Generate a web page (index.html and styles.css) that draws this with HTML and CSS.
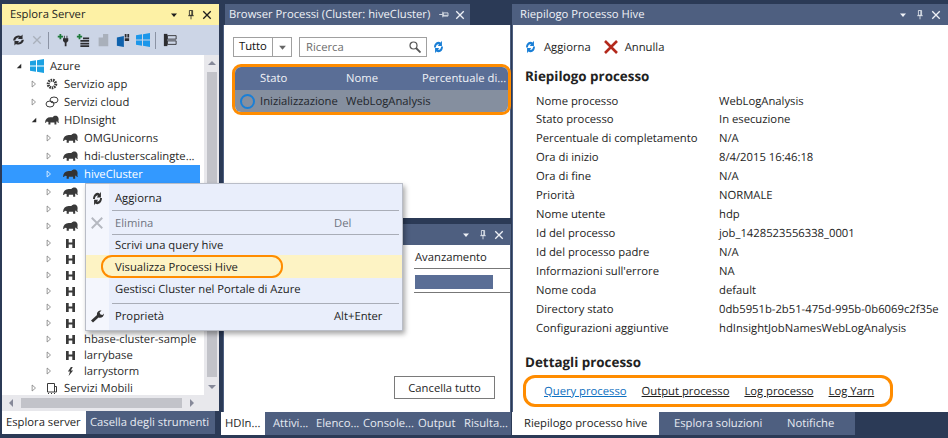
FILE: index.html
```html
<!DOCTYPE html>
<html lang="en">
<head>
    <meta charset="UTF-8">
    <meta name="viewport" content="width=device-width, initial-scale=1.0">
    <title>Riepilogo Processo Hive</title>
    <link rel="stylesheet" href="styles.css">
</head>
<body>
    <svg class="defs" width="0" height="0">
        <symbol id="refresh" viewBox="0 0 16 16" preserveAspectRatio="none">
            <path d="M1.500 8.500a6.500 6.500 0 0 1 9.700-5.700L13 .8v6H7l1.900-1.900A3.700 3.700 0 0 0 4.200 8.500z"/>
            <path d="M14.500 7.500a6.500 6.500 0 0 1-9.700 5.700L3 15.200v-6h6l-1.900 1.900a3.700 3.700 0 0 0 4.700-3.600z"/>
        </symbol>
        <symbol id="cross" viewBox="0 0 12 12">
            <path d="M1.500 1.500l9 9M10.500 1.500l-9 9" fill="none" stroke="currentColor" stroke-width="1.600"/>
        </symbol>
        <symbol id="pin" viewBox="0 0 10 12">
            <path d="M3 1h4v6H3zM1.500 7.500h7M5 8v4M6 1.500v5.500" fill="none" stroke="currentColor"/>
        </symbol>
        <symbol id="elephant" viewBox="0 0 16 12">
            <path d="M0 9C.4 5 2.500 2.800 6 2.800h3C10 1 13.500.6 14.800 2.600c1 1.500.9 3.300.5 4.600l.7 1.800h-1.400l-.8-1.500-.8.600V11h-2.200V8.800H6.200V11H3.900V8.200L2 7.800 1 9.200z"/>
        </symbol>
        <symbol id="hbase" viewBox="0 0 10 10">
            <path d="M0 0h3v3.800h4V0h3v10H7V6.200H3V10H0z"/>
        </symbol>
        <symbol id="bolt" viewBox="0 0 10 12">
            <path d="M5.500 0L1.500 6h2.800L2.500 12l6-7.200H5.500L8 0z"/>
        </symbol>
        <symbol id="windows" viewBox="0 0 14 14">
            <path d="M0 2.200L6 1.300V6.500H0zM7 1.200L14 0V6.500H7zM0 7.500H6V12.700L0 11.800zM7 7.500H14V14L7 12.800z"/>
        </symbol>
        <symbol id="caret" viewBox="0 0 8 8">
            <path d="M1 2.500h6L4 6z"/>
        </symbol>
        <symbol id="arrow" viewBox="0 0 8 10">
            <path d="M1.500 1l4.500 4-4.500 4z" fill="none" stroke="currentColor"/>
        </symbol>
        <symbol id="open" viewBox="0 0 8 8">
            <path d="M7 1v6H1z"/>
        </symbol>
    </svg>

    <div class="ide">
        <!-- esplora server -->
        <section class="pane pane-left">
            <header class="title title-active">
                <span class="title-text">Esplora Server</span>
                <svg class="btn-caret"><use href="#caret"/></svg>
                <svg class="btn-pin"><use href="#pin"/></svg>
                <svg class="btn-close"><use href="#cross"/></svg>
            </header>
            <div class="server-tools">
                <svg class="ti ti-refresh"><use href="#refresh"/></svg>
                <svg class="ti ti-off ti-small"><use href="#cross"/></svg>
                <i class="tool-sep"></i>
                <svg class="ti" viewBox="0 0 16 16"><path class="green" d="M2 3h2V1h2v2h2v2H6v2H4V5H2z"/><path d="M9 3h1v3h2V3h1v3h1v3l-2 2v4h-2v-4L8 9V6h1z"/></svg>
                <svg class="ti" viewBox="0 0 16 16"><path class="green" d="M1 3h2V1h2v2h2v2H5v2H3V5H1z"/><path d="M5 8h10v2H5zM5 11h10v2H5zM5 14h10v2H5zM8 5h7v2H8z"/></svg>
                <svg class="ti ti-off" viewBox="0 0 16 16"><path d="M3 5h5V1h6v14H3z"/></svg>
                <svg class="ti" viewBox="0 0 16 16"><path class="blue" d="M1 5l8-1.500V16l-8-1.500z"/><path d="M10 1h2v4h-2zM13 1h2v4h-2zM10 6h5v3h-5z"/></svg>
                <svg class="ti ti-win"><use href="#windows"/></svg>
                <i class="tool-sep tool-sep-2"></i>
                <svg class="ti" viewBox="0 0 16 16"><path d="M5 3h10v4H5zM5 9h10v4H5z" fill="none" stroke="currentColor"/><path d="M1 1h4v14H1z"/></svg>
            </div>
            <div class="tree-wrap">
                <div class="tree">
                    <div class="row lv0"><svg class="tw"><use href="#open"/></svg><svg class="ic ic-azure"><use href="#windows"/></svg>Azure</div>
                    <div class="row lv1"><svg class="tw tw-closed"><use href="#arrow"/></svg><svg class="ic" viewBox="0 0 14 14"><circle cx="7" cy="7" r="3.800" fill="none" stroke="currentColor" stroke-dasharray="1.500 .8" stroke-width="3"/></svg>Servizio app</div>
                    <div class="row lv1"><svg class="tw tw-closed"><use href="#arrow"/></svg><svg class="ic" viewBox="0 0 14 14"><ellipse cx="5" cy="9" rx="4" ry="3" fill="none" stroke="currentColor"/><ellipse cx="9" cy="5" rx="4" ry="3" fill="none" stroke="currentColor"/></svg>Servizi cloud</div>
                    <div class="row lv1"><svg class="tw"><use href="#open"/></svg><svg class="ic"><use href="#elephant"/></svg>HDInsight</div>
                    <div class="row lv2"><svg class="tw tw-closed"><use href="#arrow"/></svg><svg class="ic"><use href="#elephant"/></svg>OMGUnicorns</div>
                    <div class="row lv2"><svg class="tw tw-closed"><use href="#arrow"/></svg><svg class="ic"><use href="#elephant"/></svg>hdi-clusterscalingte...</div>
                    <div class="row lv2 selected"><svg class="tw tw-closed"><use href="#arrow"/></svg><svg class="ic"><use href="#elephant"/></svg>hiveCluster</div>
                    <div class="row lv2 mid"><svg class="tw tw-closed"><use href="#arrow"/></svg><svg class="ic"><use href="#elephant"/></svg></div>
                    <div class="row lv2 mid"><svg class="tw tw-closed"><use href="#arrow"/></svg><svg class="ic"><use href="#elephant"/></svg></div>
                    <div class="row lv2 mid"><svg class="tw tw-closed"><use href="#arrow"/></svg><svg class="ic"><use href="#elephant"/></svg></div>
                    <div class="row lv2 short"><svg class="tw tw-closed"><use href="#arrow"/></svg><svg class="ic ic-h"><use href="#hbase"/></svg></div>
                    <div class="row lv2 short"><svg class="tw tw-closed"><use href="#arrow"/></svg><svg class="ic ic-h"><use href="#hbase"/></svg></div>
                    <div class="row lv2 short"><svg class="tw tw-closed"><use href="#arrow"/></svg><svg class="ic ic-h"><use href="#hbase"/></svg></div>
                    <div class="row lv2 short"><svg class="tw tw-closed"><use href="#arrow"/></svg><svg class="ic ic-h"><use href="#hbase"/></svg></div>
                    <div class="row lv2 short"><svg class="tw tw-closed"><use href="#arrow"/></svg><svg class="ic ic-h"><use href="#hbase"/></svg></div>
                    <div class="row lv2 short"><svg class="tw tw-closed"><use href="#arrow"/></svg><svg class="ic ic-h"><use href="#hbase"/></svg></div>
                    <div class="row lv2 short"><svg class="tw tw-closed"><use href="#arrow"/></svg><svg class="ic ic-h"><use href="#hbase"/></svg>hbase-cluster-sample</div>
                    <div class="row lv2 short"><svg class="tw tw-closed"><use href="#arrow"/></svg><svg class="ic ic-h"><use href="#hbase"/></svg>larrybase</div>
                    <div class="row lv2 short"><svg class="tw tw-closed"><use href="#arrow"/></svg><svg class="ic ic-h"><use href="#bolt"/></svg>larrystorm</div>
                    <div class="row lv1"><svg class="tw tw-closed"><use href="#arrow"/></svg><svg class="ic" viewBox="0 0 14 14"><path d="M2.500 2.500h7v8.500h-7zM9.500 5.500h2v5.500h-2M3 12.500h1M6 12.500h1M9 12.500h1" fill="none" stroke="currentColor"/></svg>Servizi Mobili</div>
                </div>
                <div class="vscroll">
                    <i class="up"></i>
                    <i class="vthumb"></i>
                    <i class="down"></i>
                </div>
            </div>
            <div class="hscroll">
                <i class="left"></i>
                <i class="hthumb"></i>
                <i class="right"></i>
            </div>
            <nav class="tabs tabs-left">
                <span class="tab on">Esplora server</span>
                <span class="tab">Casella degli strumenti</span>
            </nav>
        </section>

        <!-- colonna centrale -->
        <section class="pane pane-mid">
            <div class="mid-top">
                <header class="title-row">
                    <div class="title title-tab">
                        <span class="title-text">Browser Processi (Cluster: hiveCluster)</span>
                        <svg class="btn-pin btn-pin-h"><use href="#pin"/></svg>
                        <svg class="btn-close"><use href="#cross"/></svg>
                    </div>
                </header>
                <div class="browser">
                    <div class="filters">
                        <div class="combo"><span class="combo-val">Tutto</span><span class="combo-btn"><svg class="combo-caret"><use href="#caret"/></svg></span></div>
                        <div class="search">
                            <span>Ricerca</span>
                            <svg class="lens" viewBox="0 0 12 12"><circle cx="4.500" cy="4.500" r="3.500" fill="none" stroke="currentColor" stroke-width="1.200"/><path d="M7 7l4.500 4.500" stroke="currentColor" stroke-width="1.800"/></svg>
                        </div>
                        <svg class="blue-refresh"><use href="#refresh"/></svg>
                    </div>
                    <div class="jobs-ring">
                        <div class="jobs-head">
                            <span class="col-state">Stato</span>
                            <span class="col-name">Nome</span>
                            <span>Percentuale di...</span>
                        </div>
                        <div class="jobs-row">
                            <i class="spinner"></i>
                            <span class="col-state-r">Inizializzazione</span>
                            <span>WebLogAnalysis</span>
                        </div>
                    </div>
                </div>
            </div>
            <div class="mid-bottom">
                <header class="title">
                    <span class="title-text"></span>
                    <svg class="btn-caret"><use href="#caret"/></svg>
                    <svg class="btn-pin"><use href="#pin"/></svg>
                    <svg class="btn-close"><use href="#cross"/></svg>
                </header>
                <div class="tasks">
                    <div class="tasks-head">Avanzamento</div>
                    <div class="tasks-row"><i class="bar"></i></div>
                    <button class="clear-btn">Cancella tutto</button>
                </div>
                <nav class="tabs tabs-mid">
                    <span class="tab on">HDIn...</span>
                    <span class="tab tab-a">Attivi...</span>
                    <span class="tab tab-b">Elenco...</span>
                    <span class="tab tab-c">Console...</span>
                    <span class="tab tab-d">Output</span>
                    <span class="tab">Risulta...</span>
                </nav>
            </div>
        </section>

        <!-- riepilogo -->
        <section class="pane pane-right">
            <header class="title">
                <span class="title-text">Riepilogo Processo Hive</span>
                <svg class="btn-caret"><use href="#caret"/></svg>
                <svg class="btn-pin"><use href="#pin"/></svg>
                <svg class="btn-close"><use href="#cross"/></svg>
            </header>
            <div class="summary">
                <div class="summary-tools">
                    <svg class="blue-refresh"><use href="#refresh"/></svg>
                    <span class="act-refresh">Aggiorna</span>
                    <svg class="red-cross" viewBox="0 0 14 14"><path d="M1 1l12 12M13 1L1 13" stroke="currentColor" stroke-width="2.600" fill="none"/></svg>
                    <span>Annulla</span>
                </div>
                <h2 class="heading">Riepilogo processo</h2>
                <dl class="props">
                    <div class="prop prop-first"><dt>Nome processo</dt><dd>WebLogAnalysis</dd></div>
                    <div class="prop"><dt>Stato processo</dt><dd>In esecuzione</dd></div>
                    <div class="prop"><dt>Percentuale di completamento</dt><dd>N/A</dd></div>
                    <div class="prop"><dt>Ora di inizio</dt><dd>8/4/2015 16:46:18</dd></div>
                    <div class="prop"><dt>Ora di fine</dt><dd>N/A</dd></div>
                    <div class="prop"><dt>Priorità</dt><dd>NORMALE</dd></div>
                    <div class="prop"><dt>Nome utente</dt><dd>hdp</dd></div>
                    <div class="prop"><dt>Id del processo</dt><dd>job_1428523556338_0001</dd></div>
                    <div class="prop"><dt>Id del processo padre</dt><dd>N/A</dd></div>
                    <div class="prop"><dt>Informazioni sull'errore</dt><dd>NA</dd></div>
                    <div class="prop"><dt>Nome coda</dt><dd>default</dd></div>
                    <div class="prop"><dt>Directory stato</dt><dd>0db5951b-2b51-475d-995b-0b6069c2f35e</dd></div>
                    <div class="prop"><dt>Configurazioni aggiuntive</dt><dd>hdInsightJobNamesWebLogAnalysis</dd></div>
                </dl>
                <h2 class="heading heading-details">Dettagli processo</h2>
                <div class="links-ring">
                    <a class="link link-on">Query processo</a>
                    <a class="link">Output processo</a>
                    <a class="link">Log processo</a>
                    <a class="link">Log Yarn</a>
                </div>
            </div>
            <nav class="tabs tabs-right">
                <span class="tab on">Riepilogo processo hive</span>
                <span class="tab tab-sol">Esplora soluzioni</span>
                <span class="tab tab-not">Notifiche</span>
            </nav>
        </section>
    </div>

    <!-- menu contestuale -->
    <div class="menu">
        <div class="mi mi-first"><svg class="mi-icon mi-refresh"><use href="#refresh"/></svg><span class="mi-text">Aggiorna</span></div>
        <i class="mi-sep"></i>
        <div class="mi mi-off"><svg class="mi-icon mi-x"><use href="#cross"/></svg><span class="mi-text">Elimina</span><span class="mi-key">Del</span></div>
        <i class="mi-sep"></i>
        <div class="mi mi-scrivi"><span class="mi-icon"></span><span class="mi-text">Scrivi una query hive</span></div>
        <div class="mi mi-hot"><span class="mi-icon"></span><span class="mi-text">Visualizza Processi Hive</span><i class="mi-ring"></i></div>
        <div class="mi mi-gest"><span class="mi-icon"></span><span class="mi-text">Gestisci Cluster nel Portale di Azure</span></div>
        <i class="mi-sep mi-sep-last"></i>
        <div class="mi"><svg class="mi-icon" viewBox="0 0 14 14"><path d="M1 11.500L7 6C6.500 3.500 8.500 1 11.500 1.500L9.500 3.500l1 2 2 .5L14 4.500C14 8 11 9.500 8.500 8.500L3 13.500z"/></svg><span class="mi-text">Proprietà</span><span class="mi-key">Alt+Enter</span></div>
    </div>
</body>
</html>
```

FILE: styles.css
```css
* {
    box-sizing: border-box;
}

body {
    margin: 0;
    width: 948px;
    height: 438px;
    overflow: hidden;
    position: relative;
    background-color: #2b3a56;
    color: #1e1e1e;
    font-family: "Open Sans", "Noto Sans", sans-serif;
    font-size: 11.25px;
    text-rendering: geometricPrecision;
}

.defs {
    display: block;
    height: 0;
}

.ide {
    display: flex;
    height: 438px;
    padding-top: 4px;
}

.pane {
    display: flex;
    flex-direction: column;
}

.pane-left {
    width: 217px;
    margin-left: 2px;
}

.pane-mid {
    width: 290px;
    margin-left: 2px;
}

.pane-right {
    width: 436px;
    margin-left: 1px;
}

/* title bars */
.title {
    display: flex;
    align-items: center;
    height: 21px;
    flex: none;
    padding: 0 7px 0 8px;
    background-color: #4e5f80;
    color: #eef1f6;
}

.title-active {
    background-color: #fdf1a5;
    color: #1e1e1e;
}

.title-text {
    flex: 1;
    white-space: nowrap;
}

.title-row {
    height: 21px;
    flex: none;
    padding-left: 4px;
}

.title-tab {
    width: 245px;
    padding: 0 5px 0 4px;
}

.btn-caret {
    width: 8px;
    height: 8px;
    fill: currentColor;
    margin-right: 9px;
}

.btn-pin {
    width: 8px;
    height: 11px;
    color: inherit;
    margin-right: 7px;
}

.btn-pin-h {
    transform: rotate(90deg);
}

.btn-close {
    width: 10px;
    height: 10px;
}

/* left pane */
.server-tools {
    display: flex;
    align-items: center;
    height: 30px;
    flex: none;
    padding-left: 9px;
    background-color: #ccd5e6;
    color: #2d2d30;
}

.ti {
    width: 14px;
    height: 14px;
    fill: currentColor;
    margin-right: 6px;
}

.ti-refresh {
    height: 12px;
    margin-left: 1px;
    margin-right: 5px;
    width: 13px;
}

.ti-off {
    color: #a9b0bb;
}

.ti-small {
    width: 10px;
    height: 10px;
    margin: 0 6px 0 2px;
}

.ti-win {
    fill: #1c97ea;
}

.green {
    fill: #1c7a3a;
}

.blue {
    fill: #0f62ad;
}

.tool-sep {
    width: 1px;
    height: 17px;
    margin: 0 7px 0 0;
    background-color: #8b93a4;
}

.tool-sep-2 {
    margin-left: -1px;
}

.tree-wrap {
    display: flex;
    height: 340px;
    flex: none;
    background-color: #fff;
}

.tree {
    width: 199px;
    padding-top: 2px;
}

.row {
    display: flex;
    align-items: center;
    height: 18px;
    white-space: nowrap;
    color: #2b2b2b;
}

.row.mid {
    height: 17.4px;
}

.row.short {
    height: 16px;
}

.selected {
    background-color: #3399ff;
    color: #fff;
}

.lv0 {
    padding-left: 14px;
}

.lv1 {
    padding-left: 29px;
}

.lv2 {
    padding-left: 44px;
}

.tw {
    width: 6px;
    height: 8px;
    fill: #2b2b2b;
    margin-right: 8px;
    flex: none;
}

.tw-closed {
    fill: none;
    color: #777;
}

.selected .tw-closed {
    color: #fff;
}

.ic {
    width: 14px;
    height: 14px;
    fill: #3a3a3a;
    color: #3a3a3a;
    margin-right: 5px;
    flex: none;
}

.lv0 .ic {
    margin-right: 6px;
}

.lv2 .ic {
    width: 15px;
    margin-right: 6px;
    margin-left: 3px;
}

.ic-h {
    height: 9px;
}

.ic-azure {
    fill: #1ba1e2;
}

.selected .ic {
    fill: #333;
}

.vscroll {
    width: 15px;
    margin-left: 4px;
    display: flex;
    flex-direction: column;
    align-items: center;
    background-color: #e8e8ec;
}

.up {
    margin: 6px 0 7px;
    border: 4px solid transparent;
    border-top: 0;
    border-bottom: 4px solid #868999;
}

.vthumb {
    width: 10px;
    flex: 1;
    background-color: #c2c3c9;
}

.down {
    margin: 8px 0 6px;
    border: 4px solid transparent;
    border-bottom: 0;
    border-top: 4px solid #868999;
}

.hscroll {
    display: flex;
    align-items: center;
    height: 16px;
    flex: none;
    background-color: #e8e8ec;
}

.left {
    margin: 0 8px 0 7px;
    border: 4px solid transparent;
    border-left: 0;
    border-right: 4px solid #868999;
}

.hthumb {
    width: 161px;
    height: 10px;
    background-color: #c2c3c9;
}

.right {
    margin-left: 8px;
    border: 4px solid transparent;
    border-right: 0;
    border-left: 4px solid #868999;
}

/* tab strips */
.tabs {
    display: flex;
    align-items: center;
    height: 23px;
    flex: none;
    color: #e6eaf2;
}

.tab {
    display: flex;
    align-items: center;
    height: 100%;
    white-space: nowrap;
    background-color: #4e5f80;
}

.tab.on {
    background-color: #fff;
    color: #1e1e1e;
}

.tabs-left .tab {
    padding: 0 4px;
    width: 84px;
}

.tabs-left .tab:last-child {
    width: 129px;
    padding-left: 4px;
}

/* middle */
.mid-top {
    height: 214px;
    flex: none;
}

.browser {
    height: 193px;
    margin-left: 2px;
    padding: 12px 0 0 9px;
    border-left: 1px solid #4e5f80;
    border-right: 1px solid #4e5f80;
    background-color: #fff;
}

.filters {
    display: flex;
    align-items: center;
    height: 20px;
}

.combo {
    display: flex;
    width: 59px;
    height: 20px;
    border: 1px solid #a0a0a0;
}

.combo-val {
    flex: 1;
    padding-left: 5px;
    line-height: 18px;
    color: #111;
}

.combo-btn {
    display: flex;
    align-items: center;
    justify-content: center;
    width: 19px;
    border-left: 1px solid #a0a0a0;
}

.combo-caret {
    width: 9px;
    height: 9px;
    fill: #666;
}

.search {
    display: flex;
    align-items: center;
    justify-content: space-between;
    width: 128px;
    height: 20px;
    margin-left: 7px;
    padding: 0 5px 0 6px;
    border: 1px solid #a0a0a0;
    color: #6d6d6d;
}

.lens {
    width: 12px;
    height: 12px;
    color: #555;
}

.blue-refresh {
    width: 11px;
    height: 14px;
    fill: #1a7fd6;
    flex: none;
}

.filters .blue-refresh {
    margin-left: 6px;
}

.jobs-ring {
    width: 279px;
    height: 51px;
    margin: 7px 0 0 -1px;
    border: 3px solid #ff8c00;
    border-radius: 9px;
    overflow: hidden;
}

.jobs-head {
    display: flex;
    align-items: center;
    height: 23px;
    white-space: nowrap;
    background-color: #5a6e96;
    color: #f0f2f7;
}

.col-state {
    width: 86px;
    margin-left: 25px;
}

.col-name {
    width: 76px;
}

.jobs-row {
    display: flex;
    align-items: center;
    height: 22px;
    white-space: nowrap;
    background-color: #858f9f;
    color: #22262c;
}

.spinner {
    width: 15px;
    height: 15px;
    margin: 0 5px 0 5px;
    border: 2px solid #1a7fd6;
    border-radius: 50%;
    flex: none;
}

.col-state-r {
    width: 86px;
}

.mid-bottom {
    display: flex;
    flex-direction: column;
    height: 211px;
    margin-top: 6px;
    margin-left: 2px;
}

.tasks {
    display: flex;
    flex-direction: column;
    flex: 1;
    padding-left: 190px;
    border-left: 1px solid #4e5f80;
    border-right: 1px solid #4e5f80;
    background-color: #fff;
}

.tasks-head {
    height: 24px;
    padding-left: 1px;
    line-height: 25px;
    border-bottom: 1px solid #777;
    margin-right: 0;
}

.tasks-row {
    height: 24px;
    padding-top: 6px;
    border-bottom: 1px solid #777;
}

.bar {
    display: block;
    width: 78px;
    height: 14px;
    margin-left: 1px;
    background-color: #5a6e96;
}

.clear-btn {
    width: 101px;
    height: 23px;
    margin: 83px 0 0 -20px;
    padding: 0;
    border: 1px solid #7a7a7a;
    background-color: #fff;
    color: #1e1e1e;
    font: inherit;
}

.tabs-mid {
    margin-left: -2px;
    background-color: #4e5f80;
}

.tabs-mid .tab {
    padding-left: 8px;
    background: none;
}

.tabs-mid .tab.on {
    width: 44px;
    padding-left: 4px;
    background-color: #fff;
}

.tabs-mid .tab-a {
    width: 43px;
}

.tabs-mid .tab-b {
    width: 48px;
}

.tabs-mid .tab-c {
    width: 55px;
    padding-left: 7px;
}

.tabs-mid .tab-d {
    width: 45px;
    padding-left: 7px;
}

/* right */
.summary {
    display: flex;
    flex-direction: column;
    height: 387px;
    flex: none;
    padding: 12px 0 0 12px;
    border-left: 1px solid #4e5f80;
    background-color: #fff;
}

.summary-tools {
    display: flex;
    align-items: center;
    height: 20px;
}

.act-refresh {
    margin: 0 13px 0 8px;
}

.red-cross {
    width: 14px;
    height: 14px;
    margin-right: 7px;
    color: #b3291c;
}

.heading {
    margin: 9px 0 7px;
    font-size: 13.4px;
    line-height: 20px;
    font-weight: 700;
    color: #222;
}

.props {
    margin: 0;
    padding-left: 11px;
}

.prop {
    display: flex;
    align-items: center;
    height: 19px;
    white-space: nowrap;
}

.prop-first {
    height: 17px;
}

.prop dt {
    width: 183px;
}

.prop dd {
    margin: 0;
}

.heading-details {
    margin: 14px 0 3px;
}

.links-ring {
    display: flex;
    align-items: center;
    width: 370px;
    height: 32px;
    margin-left: -2px;
    padding-left: 18px;
    gap: 15px;
    border: 3px solid #ff8c00;
    border-radius: 12px;
}

.link {
    color: #1e1e1e;
    text-decoration: underline;
}

.link-on {
    color: #0e70c0;
}

.tabs-right .tab {
    padding: 0 15px;
}

.tabs-right .tab.on {
    width: 147px;
    padding-left: 12px;
}

.tabs-right .tab-sol {
    width: 113px;
}

.tabs-right .tab-not {
    width: 83px;
}

/* context menu */
.menu {
    position: absolute;
    left: 85px;
    top: 183px;
    width: 318px;
    height: 148px;
    padding-top: 1px;
    background: linear-gradient(to right, #f4f6fd 23px, #e9eefb 23px);
    border: 1px solid #b9bdc7;
    box-shadow: 2px 3px 5px rgba(0, 0, 0, 0.35);
}

.mi {
    position: relative;
    display: flex;
    align-items: center;
    height: 23px;
    padding-top: 1px;
    color: #1e1e1e;
}

.mi-first {
    height: 25px;
}

.mi-scrivi {
    height: 20px;
}

.mi-gest {
    height: 22px;
}

.mi-icon {
    display: block;
    width: 14px;
    height: 14px;
    margin: 0 11px 0 4px;
    flex: none;
    fill: #333;
    color: #aeb1b8;
}

.mi-refresh {
    width: 11px;
    height: 15px;
    margin: 0 12px 0 6px;
}

.mi-text {
    flex: 1;
}

.mi-key {
    width: 68px;
}

.mi-off {
    color: #6f7480;
}

.mi-x {
    color: #b5b8c0;
}

.mi-sep {
    display: block;
    height: 1px;
    margin: 0 3px 0 26px;
    background-color: #a9adb7;
}

.mi-sep-last {
    margin-top: 3px;
}

.mi-hot {
    background-color: #fdf3c4;
}

.mi-ring {
    position: absolute;
    left: 15px;
    top: 0;
    width: 182px;
    height: 23px;
    border: 2.5px solid #ff8c00;
    border-radius: 11px;
}
```
